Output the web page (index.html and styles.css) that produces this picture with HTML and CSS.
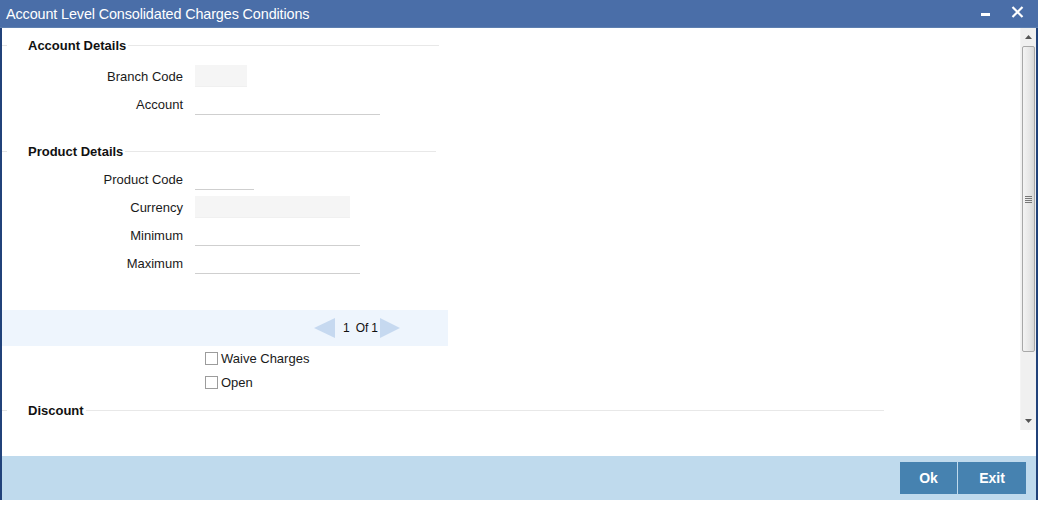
FILE: index.html
```html
<!DOCTYPE html>
<html>
<head>
<meta charset="utf-8">
<link rel="stylesheet" href="styles.css">
</head>
<body>
<div class="window">
  <div class="titlebar">
    <span class="title">Account Level Consolidated Charges Conditions</span>
    <span class="winbtns">
      <span class="minbtn"></span>
      <svg class="closebtn" width="13" height="12" viewBox="0 0 13 12"><path d="M1.5 1 L11.5 11 M11.5 1 L1.5 11" stroke="#fff" stroke-width="2.2" fill="none"/></svg>
    </span>
  </div>
  <div class="frame">
    <div class="body">
      <div class="content">
        <div class="section-head sh-account"><span class="lead"></span><span class="legend">Account Details</span><span class="rule"></span></div>
        <div class="field f-first"><label class="lbl">Branch Code</label><input class="inp ro w52" type="text"></div>
        <div class="field"><label class="lbl">Account</label><input class="inp w185" type="text"></div>

        <div class="section-head sh-product"><span class="lead"></span><span class="legend">Product Details</span><span class="rule"></span></div>
        <div class="field f-first2"><label class="lbl">Product Code</label><input class="inp w59" type="text"></div>
        <div class="field"><label class="lbl">Currency</label><input class="inp ro w155" type="text"></div>
        <div class="field"><label class="lbl">Minimum</label><input class="inp w165" type="text"></div>
        <div class="field"><label class="lbl">Maximum</label><input class="inp w165" type="text"></div>

        <div class="pager">
          <span class="arrow-left"></span>
          <span class="pagetext">1 &nbsp;Of 1</span>
          <span class="arrow-right"></span>
        </div>

        <div class="check first"><span class="box"></span><span>Waive Charges</span></div>
        <div class="check"><span class="box"></span><span>Open</span></div>

        <div class="section-head sh-discount"><span class="lead"></span><span class="legend">Discount</span><span class="rule wide"></span></div>
      </div>
      <div class="scrollbar">
        <div class="sb-up"><svg width="7" height="4" viewBox="0 0 7 4"><path d="M0 4 L3.5 0 L7 4 Z" fill="#555"/></svg></div>
        <div class="sb-thumb"><span class="grip"></span><span class="grip"></span><span class="grip"></span><span class="grip"></span></div>
        <div class="sb-track"></div>
        <div class="sb-down"><svg width="7" height="4" viewBox="0 0 7 4"><path d="M0 0 L7 0 L3.5 4 Z" fill="#555"/></svg></div>
      </div>
    </div>
    <div class="spacer"></div>
    <div class="footer">
      <button class="btn">Ok</button>
      <button class="btn exit">Exit</button>
    </div>
  </div>
</div>
</body>
</html>
```

FILE: styles.css
```css
* { box-sizing: border-box; }
html, body { margin: 0; padding: 0; background: #fff; }
body { font-family: "Liberation Sans", Arial, sans-serif; font-size: 13px; color: #1a1a1a; }

.window { width: 1038px; height: 500px; display: flex; flex-direction: column; }

.titlebar {
  height: 28px;
  background: #4a6ea8;
  border-bottom: 1px solid #5d7fb0;
  display: flex;
  align-items: center;
  justify-content: space-between;
  padding: 0 14px 0 6px;
  flex-shrink: 0;
}
.title { color: #fff; font-size: 14.4px; letter-spacing: -0.12px; }
.winbtns { display: flex; align-items: center; gap: 21px; }
.minbtn { width: 9px; height: 3px; background: #fff; margin-top: 2px; }
.closebtn { display: block; margin-top: -4px; }

.frame {
  flex: 1;
  display: flex;
  flex-direction: column;
  border-left: 2px solid #21427a;
  border-right: 2px solid #21427a;
}

.body { height: 402px; display: flex; }
.content { flex: 1; display: flex; flex-direction: column; }
.spacer { height: 26px; }

.section-head { display: flex; align-items: center; height: 20px; }
.section-head .lead { width: 5px; height: 1px; background: #e4e4e4; margin-right: 21px; }
.section-head .legend { font-weight: bold; font-size: 13px; color: #111; padding-right: 2px; }
.section-head .rule { height: 1px; background: #e8e8e8; width: 311px; }
.section-head .rule.wide { width: 798px; }
.sh-account { margin-top: 7px; }
.sh-product { margin-top: 26px; }
.sh-discount { margin-top: 8px; }

.field { display: flex; align-items: center; height: 22px; margin-top: 6px; }
.field.f-first { margin-top: 10px; }
.field.f-first2 { margin-top: 7px; }
.lbl { width: 181px; text-align: right; font-size: 13px; color: #1a1a1a; }
.inp {
  margin-left: 12px;
  height: 22px;
  border: 0;
  border-bottom: 1px solid #cfcfcf;
  background: #fff;
  padding: 0;
  outline: none;
}
.inp.ro { background: #f5f5f5; border-bottom: 1px solid #f0f0f0; }
.w52 { width: 52px; }
.w59 { width: 59px; }
.w155 { width: 155px; }
.w165 { width: 165px; }
.w185 { width: 185px; }

.pager {
  margin-top: 36px;
  width: 446px;
  height: 36px;
  background: #eef5fd;
  display: flex;
  align-items: center;
  padding-left: 312px;
}
.arrow-left { width: 0; height: 0; border-top: 10px solid transparent; border-bottom: 10px solid transparent; border-right: 21px solid #c6d9f0; }
.arrow-right { width: 0; height: 0; border-top: 10px solid transparent; border-bottom: 10px solid transparent; border-left: 20px solid #c6d9f0; }
.pagetext { font-size: 12px; color: #111; padding: 0 2px 0 8px; letter-spacing: -0.2px; }

.check { display: flex; align-items: center; height: 20px; margin-top: 4px; padding-left: 203px; font-size: 13px; color: #1a1a1a; }
.check.first { margin-top: 2px; }
.check .box { width: 13px; height: 13px; border: 1px solid #9c9c9c; background: #fff; margin-right: 3px; }

.scrollbar { width: 16px; display: flex; flex-direction: column; background: #f0f0f0; border-left: 1px solid #f4f4f4; }
.sb-up, .sb-down { height: 18px; display: flex; align-items: center; justify-content: center; }
.sb-thumb {
  height: 306px;
  margin: 0 1px;
  border: 1px solid #a8a8a8;
  border-radius: 2px;
  background: linear-gradient(to right, #f4f4f4, #e6e6e6 60%, #d8d8d8);
  display: flex;
  flex-direction: column;
  align-items: center;
  justify-content: center;
  gap: 1px;
}
.grip { width: 7px; height: 1px; background: #777; }
.sb-track { flex: 1; }

.footer {
  height: 44px;
  background: #bfdaed;
  display: flex;
  align-items: center;
  justify-content: flex-end;
  padding-right: 10px;
}
.btn {
  height: 32px;
  width: 57px;
  border: 0;
  background: #4682b0;
  color: #fff;
  font-family: "Liberation Sans", Arial, sans-serif;
  font-weight: bold;
  font-size: 14px;
  padding: 0;
  margin: 0;
}
.btn.exit { width: 68px; margin-left: 1px; }
```
